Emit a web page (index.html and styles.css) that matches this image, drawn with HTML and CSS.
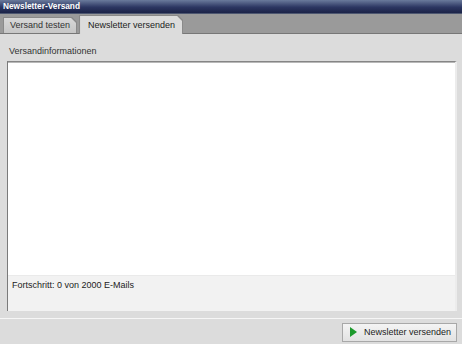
FILE: index.html
```html
<html>
<head>
<link rel="stylesheet" href="styles.css">
</head>
<body>
<div class="window">
    <div class="titlebar">Newsletter-Versand</div>
    <div class="tabs">
        <div class="tab"><span>Versand testen</span></div>
        <div class="tab active"><span>Newsletter versenden</span></div>
    </div>
    <div class="content">
        <div class="label">Versandinformationen</div>
        <div class="infobox">
            <div class="log"></div>
            <div class="progress">Fortschritt: 0 von 2000 E-Mails</div>
        </div>
    </div>
    <div class="footer">
        <button class="send">
            <svg width="7" height="10" viewBox="0 0 7 10"><polygon points="0,0 7,5 0,10" fill="#1c9a2c"/></svg>
            Newsletter versenden
        </button>
    </div>
</div>
</body>
</html>
```

FILE: styles.css
```css
body {
  margin: 0;
  font-family: "Liberation Sans", Arial, sans-serif;
  font-size: 9px;
  color: #222;
  background: #dcdcdc;
}

.window {
  display: flex;
  flex-direction: column;
  height: 344px;
}

/* title bar */
.titlebar {
  height: 14px;
  line-height: 13px;
  padding-left: 3px;
  color: #fff;
  font-weight: bold;
  font-size: 8.3px;
  background: linear-gradient(#6a7a9c, #2c3662 55%, #1b2347);
  border-bottom: 1px solid #4c5670;
  box-sizing: border-box;
}

/* tab strip */
.tabs {
  height: 20px;
  background: #9a9a9a;
  border-bottom: 1px solid #777;
  box-sizing: border-box;
  display: flex;
  align-items: flex-end;
  padding-left: 3px;
  gap: 2px;
}

.tab {
  background: #8a8a8a;
  padding: 1px 1px 0 1px;
  height: 15px;
  clip-path: polygon(0 0, calc(100% - 5px) 0, 100% 5px, 100% 100%, 0 100%);
}

.tab span {
  display: block;
  height: 100%;
  padding: 0 6px;
  line-height: 14px;
  color: #333;
  background: linear-gradient(#d8d8d8, #c6c6c6);
  clip-path: polygon(0 0, calc(100% - 5px) 0, 100% 5px, 100% 100%, 0 100%);
}

.tab.active {
  height: 18px;
  margin-bottom: -1px;
}

.tab.active span {
  background: #dcdcdc;
  line-height: 18px;
  padding: 0 7px 0 8px;
  color: #222;
}

/* main content */
.content {
  height: 284px;
  padding: 0 5px 7px 7px;
  box-sizing: border-box;
  display: flex;
  flex-direction: column;
}

.label {
  margin-top: 12px;
  height: 11px;
  line-height: 11px;
  padding-left: 2px;
  margin-bottom: 4px;
  color: #333;
}

.infobox {
  flex: 1;
  display: flex;
  flex-direction: column;
  border-top: 1px solid #858585;
  border-left: 1px solid #7a7a7a;
  border-right: 2px solid #ececec;
  box-shadow: inset 0 1px 0 #b8b8b8;
}

.log {
  flex: 1;
  background: #fff;
  border-top: 1px solid #b8b8b8;
}

.progress {
  height: 36px;
  background: #f2f2f2;
  border-top: 1px solid #eaeaea;
  box-sizing: border-box;
  padding: 4px 0 0 4px;
  line-height: 11px;
  color: #222;
}

/* bottom bar */
.footer {
  flex: 1;
  border-top: 1px solid #f6f6f6;
  display: flex;
  justify-content: flex-end;
  align-items: center;
  padding-right: 5px;
}

.send {
  height: 19px;
  width: 115px;
  margin-top: 1px;
  border: 1px solid #a8a8a8;
  background: linear-gradient(#f4f4f4, #e2e2e2);
  font-family: "Liberation Sans", Arial, sans-serif;
  font-size: 9px;
  color: #222;
  display: flex;
  align-items: center;
  gap: 7px;
  padding: 0 0 0 7px;
}
```
